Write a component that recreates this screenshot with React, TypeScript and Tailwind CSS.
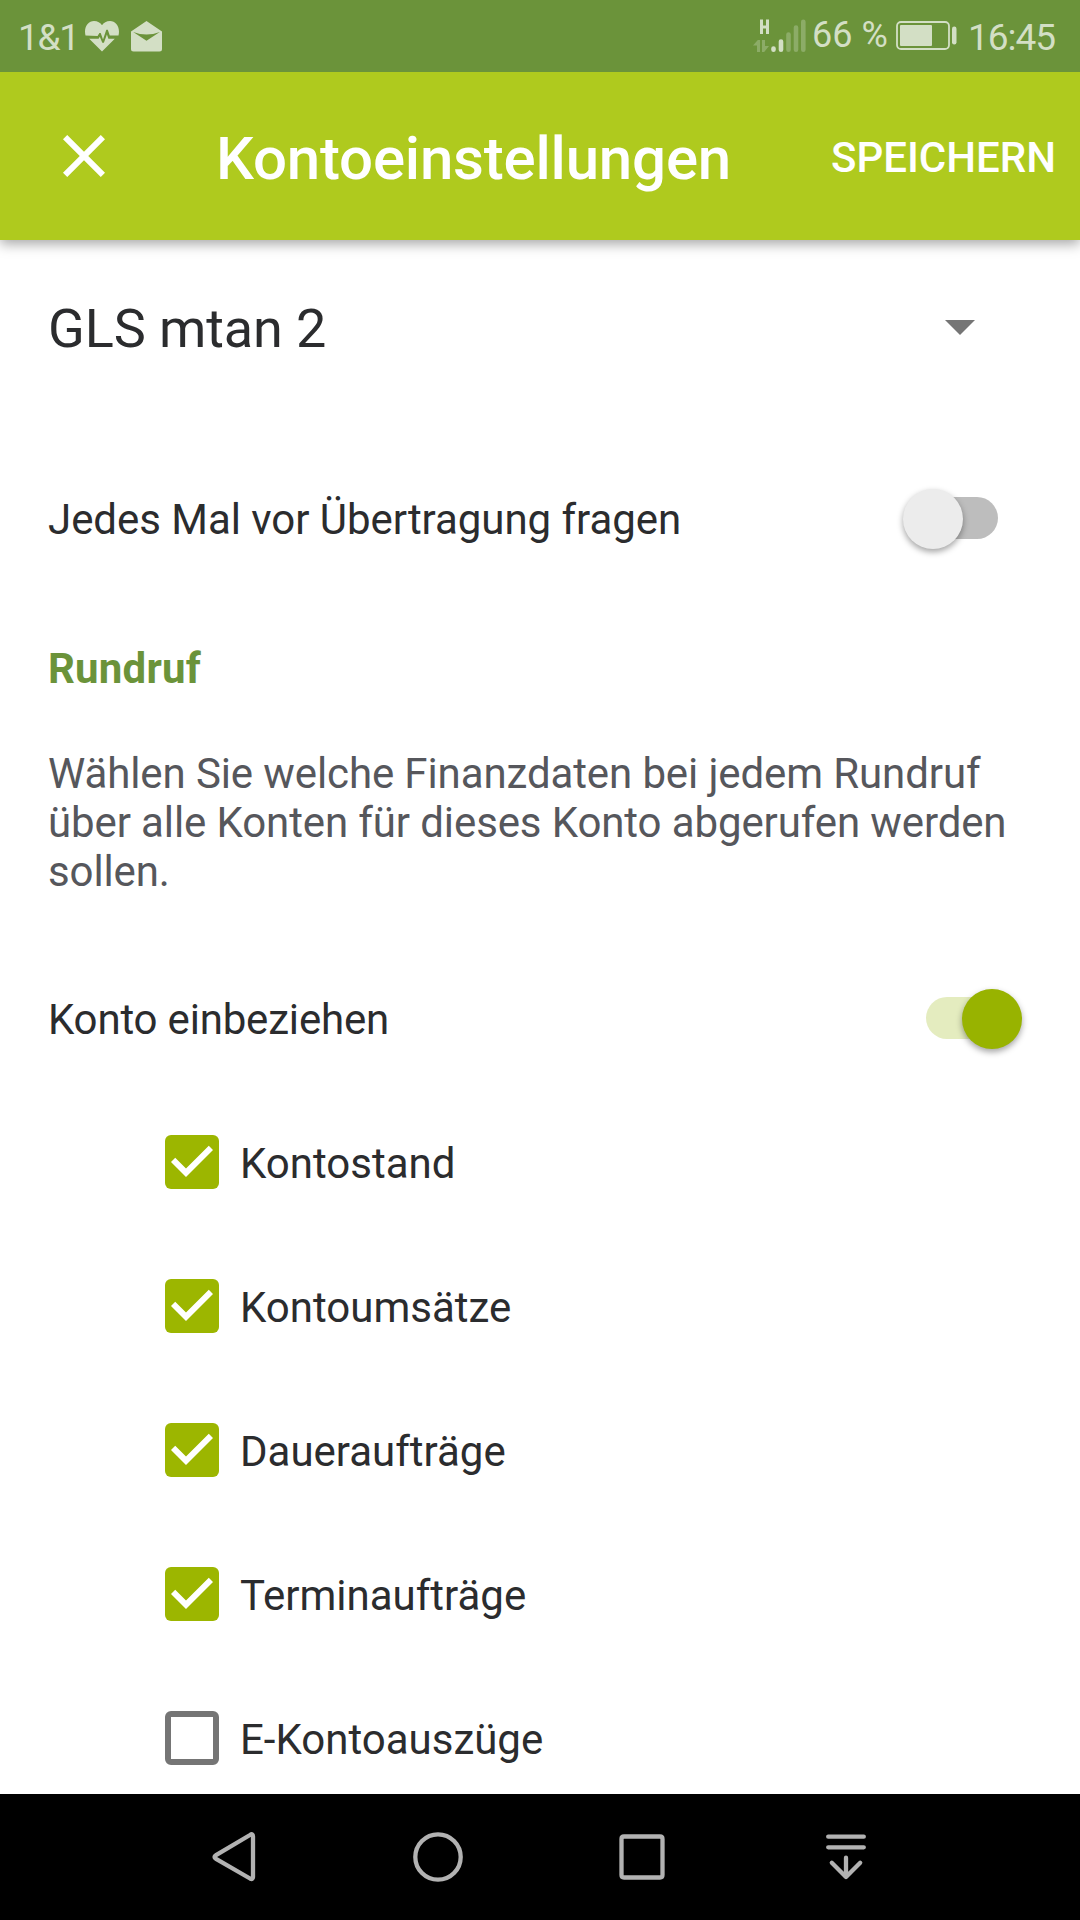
import { MdClose } from "react-icons/md";

const options = [
  { label: "Kontostand", checked: true },
  { label: "Kontoumsätze", checked: true },
  { label: "Daueraufträge", checked: true },
  { label: "Terminaufträge", checked: true },
  { label: "E-Kontoauszüge", checked: false },
];

function HeartIcon() {
  return (
    <svg width="34" height="31" viewBox="0 0 34 31" className="fill-[#d3dfc5]">
      <path d="M0.5 14.6 C-1.5 6 3 0 9 0 C12.5 0 15.5 1.8 17 4.2 C18.5 1.8 21.5 0 25 0 C31 0 35.5 6 33.5 14.6 L24.8 14.6 L22.8 8.8 L21.3 8.8 L18 18.5 L15.7 12 L14.4 12 L12.6 15 L0.5 14.6 Z" />
      <path d="M4.2 17.8 L13.6 17.8 L14.8 15.8 L17.3 21.7 L18.9 21.7 L21.9 13.4 L23.4 17.8 L29.8 17.8 L17 30.5 Z" />
    </svg>
  );
}

function MailIcon() {
  return (
    <svg width="31" height="31" viewBox="0 0 31 31" className="fill-[#d3dfc5]">
      <path
        fillRule="evenodd"
        d="M0 10.5 L15.5 0 L31 10.5 V28 Q31 30.5 28.5 30.5 H2.5 Q0 30.5 0 28 Z M2.2 11 L15.5 19.8 L28.8 11 Q15.5 16.2 2.2 11 Z"
      />
    </svg>
  );
}

function SignalIcon() {
  return (
    <svg width="53" height="34" viewBox="0 0 53 34">
      <path d="M8.5 0.5 V15 M14.5 0.5 V15 M8.5 8 H14.5" fill="none" stroke="#d3dfc5" strokeWidth="3" />
      <path d="M0 26.5 L4.8 21 H7 V33 H4 V26.5 Z M9 21 H12 V27 H16 L11.2 33 H9 Z" fill="#8cac67" />
      <g strokeWidth="4.6" strokeLinecap="round" fill="none">
        <path d="M20.5 29.5 V30.7 M28 22.5 V30.7" stroke="#d3dfc5" />
        <path d="M35.5 15.5 V30.7 M43 8.5 V30.7 M50.3 2.8 V30.7" stroke="#8cac67" />
      </g>
    </svg>
  );
}

function BatteryIcon() {
  return (
    <svg width="62" height="30" viewBox="0 0 62 30">
      <rect x="1" y="1" width="52" height="27" rx="4" fill="none" stroke="#d3dfc5" strokeWidth="1.8" />
      <rect x="4" y="4" width="32" height="21" rx="1" fill="#d3dfc5" />
      <rect x="56" y="5.5" width="4.5" height="18" rx="2.2" fill="#d3dfc5" />
    </svg>
  );
}

function StatusBar() {
  return (
    <div className="z-20 flex h-[72px] shrink-0 items-start bg-[#6b933a] text-[36px] leading-[42px] text-[#d3dfc5]">
      <span className="mt-[17px] ml-[18px] w-[67px] text-[37px] tracking-[-1.3px]">1&amp;1</span>
      <div className="mt-[21px] flex gap-[12px]">
        <HeartIcon />
        <MailIcon />
      </div>
      <div className="mt-[19px] ml-auto">
        <SignalIcon />
      </div>
      <span className="mt-[14px] ml-[6px] w-[84px] whitespace-nowrap">66 %</span>
      <div className="mt-[21px]">
        <BatteryIcon />
      </div>
      <span className="mt-[17px] ml-[10px] w-[112px] text-[37px] tracking-[-1px]">16:45</span>
    </div>
  );
}

function Switch({ on }: { on: boolean }) {
  return (
    <div className="relative flex h-[60px] w-[120px] items-center justify-center">
      <div className={`h-[42px] w-[72px] rounded-full ${on ? "bg-[#e4ecbf]" : "bg-[#bdbdbd]"}`} />
      <div
        className={`absolute top-[0.5px] size-[60px] rounded-full shadow-[0_3px_6px_rgba(0,0,0,0.36)] ${
          on ? "right-[0.5px] bg-[#98b300]" : "left-[0.5px] bg-[#ececec]"
        }`}
      />
    </div>
  );
}

function Checkbox({ checked }: { checked: boolean }) {
  if (!checked) {
    return <div className="size-[54px] rounded-[6px] border-6 border-[#757575]" />;
  }
  return (
    <div className="size-[54px] rounded-[6px] bg-[#9cb600]">
      <svg width="54" height="54" viewBox="3 3 18 18" className="fill-white">
        <path d="M10 17l-5-5 1.41-1.41L10 14.17l7.59-7.59L19 8l-9 9z" />
      </svg>
    </div>
  );
}

const navIcons = [
  { name: "back", path: "M49 9.5Q49 6 46 8L12 28.2Q9 30 12 31.8L46 51.5Q49 53 49 50Z" },
  { name: "home", path: "M30 7.3a22.7 22.7 0 1 1 0 45.4a22.7 22.7 0 1 1 0-45.4Z" },
  { name: "recents", path: "M12 9.5H48Q50.5 9.5 50.5 12V48Q50.5 50.5 48 50.5H12Q9.5 50.5 9.5 48V12Q9.5 9.5 12 9.5Z" },
  { name: "drawer", path: "M12.2 9.7H47.8M12.2 20.3H47.8M30 30.7V50M15.8 35.8L30 50L44.2 35.8" },
];

function NavBar() {
  return (
    <nav className="flex h-[126px] shrink-0 items-center justify-center bg-black">
      {navIcons.map((icon) => (
        <div key={icon.name} className="flex w-[204px] justify-center">
          <svg
            width="60"
            height="60"
            viewBox="0 0 60 60"
            fill="none"
            stroke="#b2b2b2"
            strokeWidth="4.3"
            strokeLinecap="round"
            strokeLinejoin="round"
          >
            <path d={icon.path} />
          </svg>
        </div>
      ))}
    </nav>
  );
}

export default function App() {
  return (
    <div className="flex h-[1920px] w-[1080px] flex-col overflow-hidden bg-white font-[Roboto,sans-serif] text-[#2b2c2e]">
      <StatusBar />

      <header className="z-10 flex h-[168px] shrink-0 items-center bg-[#afca1e] text-white shadow-[0_4px_12px_rgba(0,0,0,0.35)]">
        <MdClose className="ml-[48px] size-[72px]" />
        <h1 className="mt-[5px] ml-[96px] text-[60px] leading-[70px] font-medium tracking-[-0.2px]">
          Kontoeinstellungen
        </h1>
        <button className="mt-[4px] mr-[24px] ml-auto text-[42px] leading-[50px] font-medium">SPEICHERN</button>
      </header>

      <main className="flex min-h-0 flex-1 flex-col overflow-hidden text-[42px] leading-[49px]">
        {/* Account selection */}
        <div className="flex h-[206px] shrink-0 items-start justify-between pt-[57px] pr-[105px] pl-[48px]">
          <span className="text-[54px] leading-[64px] tracking-[-0.1px]">GLS mtan 2</span>
          <svg width="30" height="15" viewBox="0 0 30 15" className="mt-[23px] fill-[#757575]">
            <path d="M0 0h30L15 15z" />
          </svg>
        </div>

        <div className="flex h-[144px] shrink-0 items-center justify-between pr-[58px] pl-[48px]">
          <span className="pt-[2px] tracking-[-0.04px]">Jedes Mal vor Übertragung fragen</span>
          <Switch on={false} />
        </div>

        <section className="h-[356px] shrink-0 px-[48px] pt-[54px]">
          <h2 className="font-bold tracking-[0.2px] text-[#6b933a]">Rundruf</h2>
          <p className="mt-[56px] tracking-[-0.11px] text-[#56575c]">
            Wählen Sie welche Finanzdaten bei jedem Rundruf über alle Konten für dieses Konto abgerufen werden sollen.
          </p>
        </section>

        <div className="flex h-[144px] shrink-0 items-center justify-between pr-[58px] pl-[48px]">
          <span className="pt-[2px] tracking-[-0.18px]">Konto einbeziehen</span>
          <Switch on />
        </div>

        {options.map((option) => (
          <label key={option.label} className="flex h-[144px] shrink-0 items-center gap-[21px] pl-[165px]">
            <Checkbox checked={option.checked} />
            <span className="pt-[2px]">{option.label}</span>
          </label>
        ))}
      </main>

      <NavBar />
    </div>
  );
}
